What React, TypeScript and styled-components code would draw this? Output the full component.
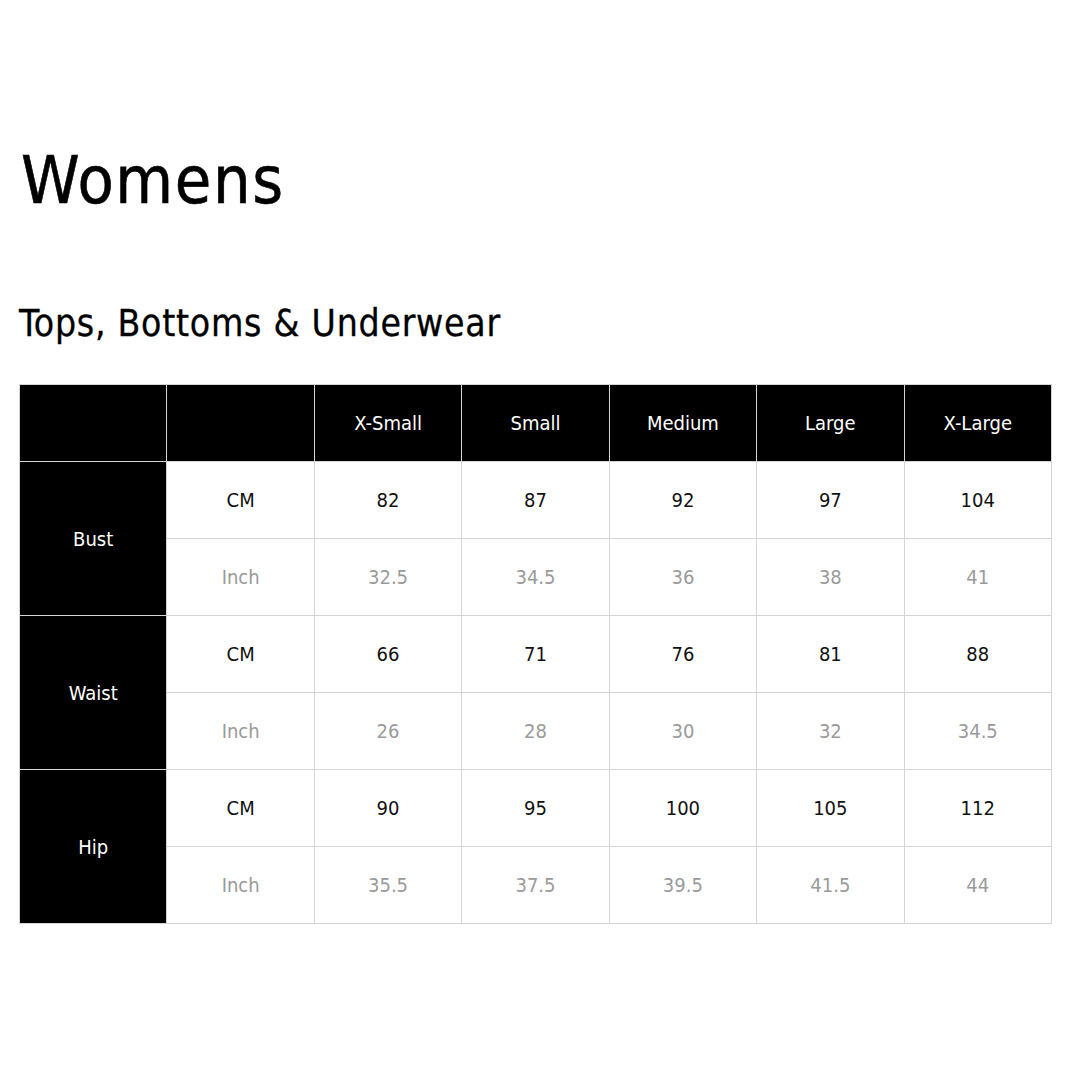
import React from "react";
import styled, { createGlobalStyle } from "styled-components";

const Global = createGlobalStyle`
  html, body { margin: 0; padding: 0; background: #fff; }
  body { font-family: "DejaVu Sans Condensed", "DejaVu Sans", sans-serif; color: #000; }
`;

const Page = styled.div`
  width: 1080px;
  height: 1080px;
  box-sizing: border-box;
  padding: 131px 28px 0 19px;
`;

const Title = styled.h1`
  margin: 0 0 0 2px;
  font-family: "DejaVu Sans Condensed", "DejaVu Sans", sans-serif;
  font-weight: normal;
  font-size: 66px;
  line-height: 100px;
  letter-spacing: 1.6px;
  -webkit-text-stroke: 0.6px #000;
`;

const Subtitle = styled.h2`
  margin: 68px 0 0 0;
  font-family: "DejaVu Sans Condensed", "DejaVu Sans", sans-serif;
  font-weight: normal;
  font-size: 37px;
  line-height: 50px;
  letter-spacing: 0.75px;
  -webkit-text-stroke: 0.3px #000;
`;

const Table = styled.table`
  margin-top: 35px;
  width: 1033px;
  border-collapse: collapse;
  table-layout: fixed;
  font-family: "DejaVu Sans Condensed", "DejaVu Sans", sans-serif;
  font-size: 20px;
`;

const Cell = styled.td<{ $dark?: boolean; $muted?: boolean }>`
  height: 76px;
  padding: 0;
  text-align: center;
  vertical-align: middle;
  font-weight: normal;
  border: 1px solid #d4d4d4;
  background: ${(p) => (p.$dark ? "#000" : "#fff")};
  color: ${(p) => (p.$dark ? "#fff" : p.$muted ? "#9a9a9a" : "#111")};
`;

const sizes = ["X-Small", "Small", "Medium", "Large", "X-Large"];

const data = [
  { name: "Bust", cm: ["82", "87", "92", "97", "104"], inch: ["32.5", "34.5", "36", "38", "41"] },
  { name: "Waist", cm: ["66", "71", "76", "81", "88"], inch: ["26", "28", "30", "32", "34.5"] },
  { name: "Hip", cm: ["90", "95", "100", "105", "112"], inch: ["35.5", "37.5", "39.5", "41.5", "44"] },
];

export default function App() {
  return (
    <>
      <Global />
      <Page>
        <Title>Womens</Title>
        <Subtitle>Tops, Bottoms &amp; Underwear</Subtitle>
        <Table>
          <tbody>
            <tr>
              <Cell as="th" $dark />
              <Cell as="th" $dark />
              {sizes.map((s) => (
                <Cell as="th" $dark key={s}>
                  {s}
                </Cell>
              ))}
            </tr>
            {data.map((m) => (
              <React.Fragment key={m.name}>
                <tr>
                  <Cell $dark rowSpan={2}>{m.name}</Cell>
                  <Cell>CM</Cell>
                  {m.cm.map((v, i) => (
                    <Cell key={i}>{v}</Cell>
                  ))}
                </tr>
                <tr>
                  <Cell $muted>Inch</Cell>
                  {m.inch.map((v, i) => (
                    <Cell $muted key={i}>{v}</Cell>
                  ))}
                </tr>
              </React.Fragment>
            ))}
          </tbody>
        </Table>
      </Page>
    </>
  );
}
